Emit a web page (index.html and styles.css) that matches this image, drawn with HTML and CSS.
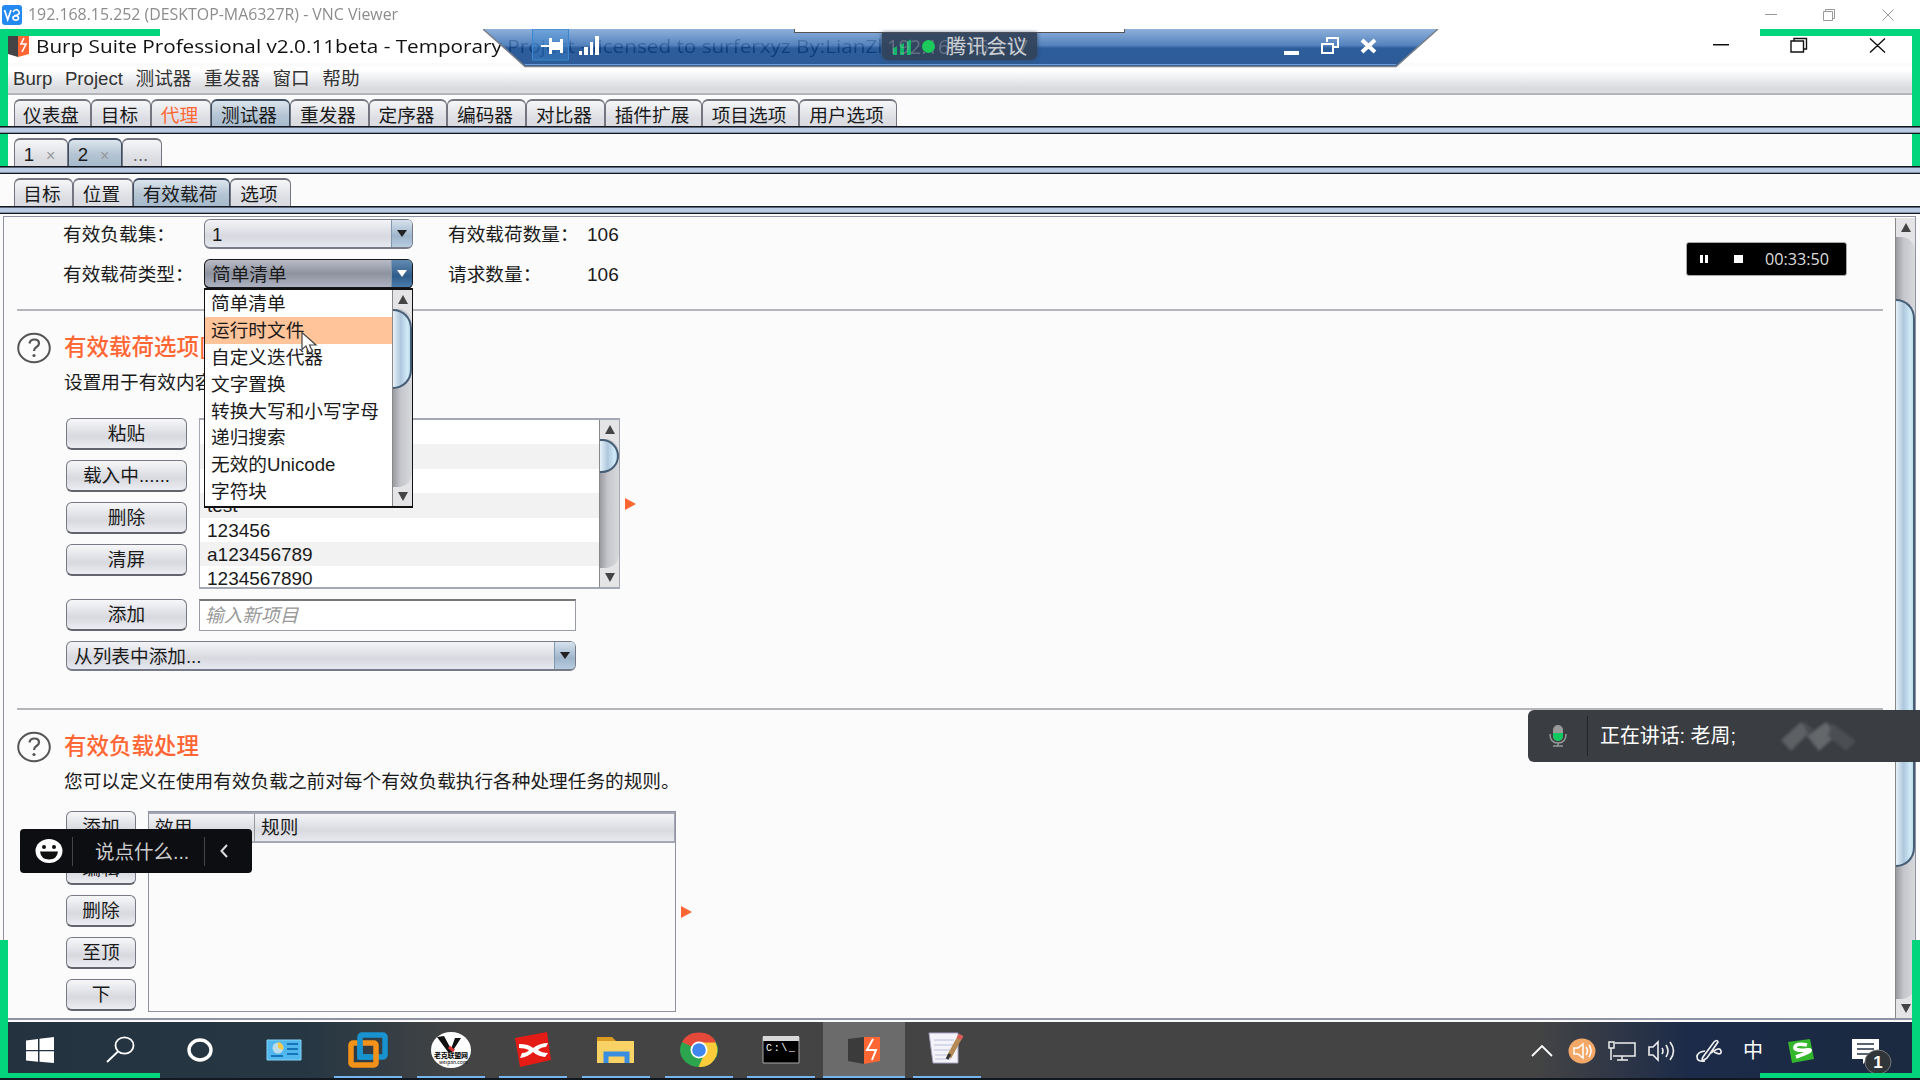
FILE: index.html
```html
<!DOCTYPE html>
<html lang="zh-CN">
<head>
<meta charset="utf-8">
<title>VNC Viewer</title>
<link rel="stylesheet" href="styles.css">
</head>
<body>
<div class="screen">
  <header class="vnc-bar">
    <svg class="vnc-logo" viewBox="0 0 20 20"><rect width="20" height="20" rx="3" fill="#2489f0"/><path d="M2.500 5l3.200 9.500L9 5M11 7q3-4 5.500-1t-2.500 4.500l-3 1.500M12 10.500q4.500 0 4.500 2.500t-4 2q-2.500-1-1-3.500" fill="none" stroke="#fff" stroke-width="1.700"/></svg>
    <span class="vnc-title">192.168.15.252 (DESKTOP-MA6327R) - VNC Viewer</span>
    <svg class="vnc-controls" viewBox="0 0 130 14" fill="none" stroke="#999"><path d="M0 6.500h12M58.500 3.500h9v9h-9zM60.500 3V1.500h9v9H68M117.500 1.500l11 11m0-11l-11 11"/></svg>
  </header>
  <div class="burp-title">
    <svg class="burp-logo" viewBox="0 0 21 21"><path fill="#444345" d="M0 0h10v21L0 18z"/><path fill="#ff6633" d="M10 0h11v18l-11 3z"/><path d="M16 2l-3 6h5l-4 8" fill="none" stroke="#fff" stroke-width="1.600"/></svg>
    <span class="burp-caption">Burp Suite Professional v2.0.11beta - Temporary Project - licensed to surferxyz By:LianZhang</span>
    <svg class="burp-controls" viewBox="0 0 176 18" fill="none" stroke="#111" stroke-width="1.400"><path d="M0 7.700h16M78 4h12.500v11H78zM81 4V1.500h12.500V12H91M157 1.500l15 14m0-14l-15 14"/></svg>
  </div>
  <nav class="menu"><span>Burp</span><span>Project</span><span>测试器</span><span>重发器</span><span>窗口</span><span>帮助</span></nav>
  <div class="tabs t1"><span style="width:77px">仪表盘</span><span style="width:60px">目标</span><span class="hot" style="width:60px">代理</span><span class="on" style="width:79px">测试器</span><span style="width:79px">重发器</span><span style="width:78px">定序器</span><span style="width:79px">编码器</span><span style="width:79px">对比器</span><span style="width:97px">插件扩展</span><span style="width:97px">项目选项</span><span style="width:98px">用户选项</span></div>
  <div class="tabs t2"><span style="width:54px">1<i>×</i></span><span class="on" style="width:54px">2<i>×</i></span><span class="dots" style="width:40px">...</span></div>
  <div class="tabs t3"><span style="width:59px">目标</span><span style="width:60px">位置</span><span class="on" style="width:97px">有效载荷</span><span style="width:61px">选项</span></div>

  <main class="pane">
    <div class="content">
      <section class="sets">
        <label>有效负载集：</label>
        <div class="combo"><b>1</b><i></i></div>
        <label class="second">有效载荷数量：</label><span class="num">106</span>
        <label>有效载荷类型：</label>
        <div class="combo open"><b>简单清单</b><i></i>
          <div class="popup">
            <ul><li>简单清单</li><li class="sel">运行时文件</li><li>自定义迭代器</li><li>文字置换</li><li>转换大写和小写字母</li><li>递归搜索</li><li>无效的Unicode</li><li>字符块</li></ul>
            <div class="sb"><span class="up"></span><span class="track"><span class="thumb" style="height:80px"></span></span><span class="down"></span></div>
            <svg class="cursor" viewBox="0 0 18 24"><path d="M1 1v17l4-3.500 3 7 3.500-1.500-3-6.500H15z" fill="#fff" stroke="#444" stroke-width="1.200"/></svg>
          </div>
        </div>
        <label class="second">请求数量：</label><span class="num">106</span>
      </section>

      <section class="block options">
        <svg class="help" viewBox="0 0 34 32"><ellipse cx="17" cy="16" rx="15.800" ry="14.300" fill="none" stroke="#555" stroke-width="2"/><path d="M12.500 11.500q.500-4 5-4t4.500 4q0 2-2.500 3.500T17 19" fill="none" stroke="#555" stroke-width="2.200"/><circle cx="17" cy="23.500" r="1.600" fill="#555"/></svg>
        <h2>有效载荷选项[</h2>
        <p>设置用于有效内容</p>
        <div class="list-row">
          <div class="buttons"><button>粘贴</button><button>载入中......</button><button>删除</button><button>清屏</button></div>
          <div class="list">
            <ul><li></li><li></li><li></li><li>test</li><li>123456</li><li>a123456789</li><li>1234567890</li></ul>
            <div class="sb"><span class="up"></span><span class="track"><span class="thumb" style="height:34px"></span></span><span class="down"></span></div>
          </div>
          <span class="marker"></span>
        </div>
        <div class="add-row"><button>添加</button><div class="field">输入新项目</div></div>
        <div class="combo wide"><b>从列表中添加...</b><i></i></div>
      </section>

      <section class="block rules">
        <svg class="help" viewBox="0 0 34 32"><ellipse cx="17" cy="16" rx="15.800" ry="14.300" fill="none" stroke="#555" stroke-width="2"/><path d="M12.500 11.500q.500-4 5-4t4.500 4q0 2-2.500 3.500T17 19" fill="none" stroke="#555" stroke-width="2.200"/><circle cx="17" cy="23.500" r="1.600" fill="#555"/></svg>
        <h2>有效负载处理</h2>
        <p>您可以定义在使用有效负载之前对每个有效负载执行各种处理任务的规则。</p>
        <div class="rule-row">
          <div class="buttons small"><button>添加</button><button>编辑</button><button>删除</button><button>至顶</button><button>下</button></div>
          <div class="table"><div class="thead"><span>效用</span><span>规则</span></div></div>
          <span class="marker"></span>
        </div>
      </section>
    </div>
    <div class="sb main-sb"><span class="up"></span><span class="track"><span class="thumb" style="height:568px"></span></span><span class="down"></span></div>
  </main>

  <footer class="taskbar">
    <div class="apps">
      <span class="app plain"><svg viewBox="0 0 44 44"><path fill="#fff" d="M8 12.500l12-1.500v11H8zM21.500 10.800L36 9v13H21.500zM8 23.300h12v10.500L8 32.500zM21.500 23.300H36V35l-14.500-1.300z"/></svg></span>
      <span class="app plain"><svg viewBox="0 0 44 44" fill="none" stroke="#fff" stroke-width="1.800"><ellipse cx="26.500" cy="17.500" rx="9" ry="8.200"/><path d="M20 23.500L9 34"/></svg></span>
      <span class="app plain"><svg viewBox="0 0 44 44"><ellipse cx="22" cy="22" rx="11" ry="10" fill="none" stroke="#fff" stroke-width="3.400"/></svg></span>
      <span class="app plain"><svg viewBox="0 0 44 44"><path fill="#50b8ef" stroke="#84d3f7" d="M5 12h34v20H5z"/><circle cx="16" cy="20" r="5.500" fill="#bcdcea"/><path fill="#f2c94c" d="M16 20v-6a6 6 0 015 8z"/><path d="M9 28h12M25 16h11M25 21h11M25 26h11" stroke="#1675b8" stroke-width="2"/></svg></span>
      <span class="app"><svg viewBox="0 0 44 44" fill="none" stroke-width="5.500"><rect x="14" y="7" width="25" height="22" rx="2" stroke="#1993d0"/><rect x="5" y="15" width="25" height="22" rx="2" stroke="#f29218"/><path d="M14 12v17h11" stroke="#1993d0"/></svg></span>
      <span class="app"><svg viewBox="0 0 44 44"><ellipse cx="22" cy="22" rx="20" ry="18" fill="#fff"/><path fill="#111" d="M8 9l7-1 7 13 4-11h6l-9 14h-4z"/><path d="M20 19l5 4" stroke="#d33" stroke-width="3"/><text x="5" y="30" font-size="7" font-weight="700" textLength="34" class="badge-text">老克联盟网</text><text x="10" y="36" font-size="5" class="badge-text">weipan.com</text></svg></span>
      <span class="app"><svg viewBox="0 0 44 44"><path fill="#e51c16" d="M4 10l32-6 4 28-31 7z"/><path fill="#fff" d="M8 16q10 0 14 4 7-5 15-5l-2 4q-5 0-8 3 4 3 10 3l-3 4q-8-1-12-5-5 5-13 6l2-5q5 0 7-3-4-2-10-2z"/></svg></span>
      <span class="app"><svg viewBox="0 0 44 44"><path fill="#d99b20" d="M3 9h15l4 4v8H3z"/><path fill="#f9d266" d="M3 13h37v22H3z"/><path d="M12 35V26h21v9" fill="none" stroke="#3a8ee0" stroke-width="5"/></svg></span>
      <span class="app"><svg viewBox="0 0 44 44"><ellipse cx="22" cy="22" rx="19" ry="17" fill="#2da44e"/><path d="M5 14a19 17 0 0134 0L22 22z" fill="#e5493a"/><path d="M38.500 14.500a17 17 0 01-17 24.500L29 22l-6-7.500z" fill="#fbcb3b"/><circle cx="22" cy="22" r="8.500" fill="#fff"/><circle cx="22" cy="22" r="6.800" fill="#3f86ee"/></svg></span>
      <span class="app"><svg viewBox="0 0 44 44"><path fill="#000" stroke="#aaa" d="M4 9h36v26H4z"/><path fill="#d8d8d8" d="M4 8h36v5H4z"/><text x="7" y="23" font-size="10" fill="#fff" textLength="29" class="mono">C:\_</text></svg></span>
      <span class="app active"><svg viewBox="0 0 44 44"><path fill="#3b3b3b" d="M6 11l16-2v27L6 33z"/><path fill="#ff6633" d="M22 9h16v24l-16 3z"/><path d="M31 11l-6 11h9l-4 10" fill="none" stroke="#fff" stroke-width="2"/></svg></span>
      <span class="app"><svg viewBox="0 0 44 44"><path fill="#f4f3fa" stroke="#a9a5c5" d="M4 5h29v30H8z"/><path d="M9 12h20M9 17h19M9 22h16M10 27h14M10 31h16" stroke="#b9bed6"/><path d="M36 7L24 29" stroke="#b48a55" stroke-width="5"/><path d="M36 7l-2 4" stroke="#dc5b58" stroke-width="5"/><path d="M25 26l-3 5" stroke="#333" stroke-width="3"/></svg></span>
    </div>
    <div class="tray">
      <svg class="chevron" style="width:22px" viewBox="0 0 22 30" fill="none" stroke="#fff" stroke-width="1.800"><path d="M1 20l10-10 10 10"/></svg>
      <svg style="width:28px" viewBox="0 0 28 30"><ellipse cx="14" cy="15" rx="13.500" ry="12.500" fill="#f3a868"/><path d="M6 12h4l5-4v14l-5-4H6zM18 11q3 4 0 8M21 9q4 6 0 12" fill="none" stroke="#fff" stroke-width="1.500"/></svg>
      <svg style="width:28px" viewBox="0 0 28 30" fill="none" stroke="#eee" stroke-width="1.500"><path d="M7 7h20v13H5M14 20v4M9 24h11M1 6h5v6H1zM3 12v12"/></svg>
      <svg style="width:29px" viewBox="0 0 29 30" fill="none" stroke="#eee" stroke-width="1.600"><path d="M1 11h4l5-5v18l-5-5H1zM14 12q2 3 0 6M18 9q4 6 0 12M22 6q7 9 0 18"/></svg>
      <svg class="pen" style="width:28px" viewBox="0 0 28 30" fill="none" stroke="#eee" stroke-width="1.700"><path d="M9 24q-3 1-1-3L19 6q3-3 4 0L12 22zM10 15q-8 1-8 6t8 4M16 17q9-7 10-2t-7 1"/></svg>
      <span class="ime">中</span>
      <svg style="width:28px" viewBox="0 0 28 30"><path fill="#35b72d" d="M1 6l22-3 4 20-22 4z"/><path d="M20 9q-11-2-12 2t11 3-10 7" fill="none" stroke="#fff" stroke-width="3.600"/></svg>
      <svg class="notice" viewBox="0 0 42 40"><path fill="#fff" d="M1 4h27v20H17l-5 5v-5H1z"/><path d="M6 9h17M6 14h17M6 19h12" stroke="#253044" stroke-width="1.500"/><ellipse cx="27" cy="27" rx="13" ry="12" fill="#30353a" stroke="#777"/><text x="27" y="33" text-anchor="middle" font-size="17" font-weight="700" fill="#fff" class="sans">1</text></svg>
    </div>
  </footer>

  <div class="rdp">
    <svg viewBox="0 0 956 39"><defs><linearGradient id="g" x2="0" y2="1"><stop stop-color="#7da5d6"/><stop offset=".430" stop-color="#3a70b3"/><stop offset=".500" stop-color="#0f458e"/><stop offset="1" stop-color="#0d4387"/></linearGradient></defs><path d="M0 0h955l-42 38H42z" fill="url(#g)" fill-opacity=".87"/><path d="M0 0l42 37.500h871L955 0" fill="none" stroke="#7a8087" stroke-width="1.500"/><path d="M42 35.500h871" stroke="#6c9ddb"/><path d="M49.500 0h36v31h-36z" fill="#3b8bd8" fill-opacity=".35" stroke="#3b86d0"/><path d="M58 17h9" stroke="#fff" stroke-width="2"/><path fill="#fff" d="M66 9h3v4h8v-3h3v14h-3v-3h-8v4h-3z"/><path fill="#fff" d="M96 22h3v4h-3zM101 18h4v8h-4zM107 13h3v13h-3zM112 7h4v19h-4zM801 22h15v4h-15z"/><path d="M839 15h11v9h-11zM844 13V9h11v9h-4" fill="none" stroke="#fff" stroke-width="2"/><path d="M879 11l13 12m0-12l-13 12" stroke="#fff" stroke-width="4"/></svg>
    <span class="meeting-edge"></span>
    <div class="meeting"><i class="bars"></i><i class="dot"></i><b>腾讯会议</b><em>192.168.15.117</em></div>
  </div>
  <div class="timer"><i class="pause"></i><i class="stop"></i><span>00:33:50</span></div>
  <div class="speaking"><svg viewBox="0 0 20 24"><rect x="5" y="1" width="10" height="16" rx="5" fill="#999"/><path d="M5 9h10v3a5 5 0 01-10 0z" fill="#10c95f"/><path d="M2 10q0 9 8 9t8-9M10 19v3M5 22h10" fill="none" stroke="#999" stroke-width="1.500"/></svg><i></i><span>正在讲话: 老周;</span><svg class="smudge" viewBox="0 0 80 36"><path d="M3 22L23 4l10 9-20 20z" fill="#5d6164"/><path d="M29 18L48 4l12 12-19 17z" fill="#64686b"/><path d="M25 3l10 8-6 5zM54 5l24 18-10 10-18-15z" fill="#4b4f53"/></svg></div>
  <div class="chat"><svg viewBox="0 0 28 24"><ellipse cx="14" cy="12" rx="13.500" ry="12" fill="#fff"/><circle cx="9" cy="8" r="2" fill="#111"/><circle cx="19" cy="8" r="2" fill="#111"/><path d="M5 12.500h18q-1 8-9 8t-9-8z" fill="#111"/></svg><i></i><span>说点什么...</span><i></i><svg class="chev" viewBox="0 0 10 14"><path d="M8 1L2.500 7 8 13" fill="none" stroke="#ddd" stroke-width="2"/></svg></div>
  <i class="corner tl"></i><i class="corner tr"></i><i class="corner bl"></i><i class="corner br"></i>
</div>
</body>
</html>
```
FILE: styles.css
```css
* { box-sizing: border-box; }
body { margin: 0; background: #fbfbfb; color: #1a1a1a; font: 18.670px/24px "Liberation Sans", "Noto Sans CJK SC", sans-serif; }
i, em { font-style: normal; }
b { font-weight: 400; }
.screen { position: relative; width: 1920px; height: 1080px; overflow: hidden; display: flex; flex-direction: column; white-space: nowrap; }
.vnc-bar { height: 29px; background: #fff; display: flex; align-items: center; padding: 0 25px 0 2px; gap: 6px; }
.vnc-logo { width: 20px; height: 20px; }
.vnc-title { font: 16px/29px "Open Sans", sans-serif; color: #8c8c8c; transform: scaleX(.993); transform-origin: left; }
.vnc-controls { width: 130px; height: 14px; margin-left: auto; }
.burp-title { height: 34px; background: #fff; display: flex; align-items: center; padding: 0 31px 0 8px; }
.burp-logo { width: 21px; height: 21px; }
.burp-caption { font: 19px/34px "Open Sans", sans-serif; color: #111; margin-left: 7px; transform: scaleX(1.090); transform-origin: left; }
.burp-controls { width: 176px; height: 18px; margin-left: auto; flex: none; }
.menu { height: 32px; display: flex; align-items: center; padding: 1px 0 0 13px; gap: 12.500px; background: linear-gradient(#fafafa, #fff 25%, #d8dade 85%, #dcdee2); border-bottom: 2px solid #b3b5bb; color: #333; }
.tabs { height: 40px; padding: 4px 0 0 14px; display: flex; background: #fbfbfb; position: relative; border-bottom: 6px solid #b8cbe4; }
.tabs::after { content: ""; position: absolute; left: 0; right: 0; bottom: -6px; height: 6px; border: 1px solid #14161e; background: #b8cbe2; border-width: 1px 0; box-shadow: inset 0 1px #5d6678, inset 0 -1px #8b96aa; z-index: 2; }
.t1 { height: 39px; }
.tabs span { height: 31px; line-height: 29px; text-align: center; padding-right: 3px; border: 2px solid #737580; border-width: 2px 1px 0; border-radius: 6px 6px 0 0; background: linear-gradient(#f6f6f8, #dcdee3 60%, #d8dae0); }
.tabs .on { background: linear-gradient(#dbe5ec, #b4c4d3 50%, #a2b8cb); z-index: 1; border-color: #3f4c60; }
.tabs .hot { color: #ff6633; }
.tabs i { color: #999; font-size: 16px; margin-left: 12px; }
.tabs .dots { color: #666; }
.pane { margin: 2px 4px 0 3px; height: 804px; border: 1px solid #8f92a3; border-width: 1px 1px 2px 1px; padding: 1px 0 0 1px; display: flex; flex: none; }
.content { flex: 1; padding: 0 12px 0 12px; }
.sets { display: grid; grid-template-columns: 141px 209px 138px 1fr; grid-template-rows: 30px 30px; row-gap: 10px; padding: 1px 0 0 46px; height: 91px; }
.sets label, .sets .num { line-height: 31px; }
.sets .second { padding-left: 35px; }
.sets .num { padding-left: 36px; font-size: 19px; }
.combo { position: relative; height: 30px; display: flex; border: 1px solid #777b87; border-bottom-width: 2px; border-radius: 6px; background: linear-gradient(#f4f4f7, #d7d9df 60%, #e6e8ef); line-height: 29px; }
.combo b { flex: 1; padding-left: 7px; }
.combo > i { width: 21px; background: linear-gradient(#d6e2ed, #9eb5cb 60%, #b8cce0); border-left: 1px solid #8298ad; border-radius: 0 4px 4px 0; display: grid; place-items: center; }
.combo > i::after { content: ""; border: 5px solid transparent; border-top: 7px solid #222; border-bottom: 0; }
.combo.open { border-color: #16181d; background: linear-gradient(#b9bcc7, #8e929f 50%, #adb2c2); }
.combo.open > i { background: linear-gradient(#638bb2, #2f5c8b 60%, #4b7dab); }
.combo.open > i::after { border-top-color: #fff; }
.popup { position: absolute; left: -1px; top: 28px; width: 209px; height: 220px; z-index: 3; border: 2px solid #111; border-width: 2px 1px; background: #fff; display: flex; }
.popup ul { flex: 1; }
ul { margin: 0; padding: 0; list-style: none; }
.popup li { height: 26.900px; line-height: 27px; padding-left: 6px; }
.popup .sel { background: #ffc499; }
.cursor { position: absolute; left: 96px; top: 41px; width: 18px; height: 25px; }
.sb { width: 20px; display: flex; flex-direction: column; background: #e4e4e6; border-left: 1px solid #888; }
.sb .up, .sb .down { height: 19px; display: grid; place-items: center; flex: none; }
.sb .up::after { content: ""; border: 5px solid transparent; border-bottom: 9px solid #444; border-top: 0; }
.sb .down::after { content: ""; border: 5px solid transparent; border-top: 9px solid #444; border-bottom: 0; }
.sb .track { flex: 1; background: linear-gradient(90deg, #999ba1, #c5c6cb 40%, #d8d9dd); border-radius: 0 14px 14px 0; }
.sb .thumb { display: block; border: 2px solid #465d76; border-left: 0; border-radius: 0 20px 20px 0; background: linear-gradient(90deg, #e5f1f8, #afc7de 45%, #d0ebf7 85%, #bcdae9); }
.block { border-top: 2px solid #b6b6ba; position: relative; display: flex; flex-direction: column; align-items: flex-start; padding-left: 49px; }
.help { position: absolute; left: 0; top: 21px; width: 34px; height: 32px; }
h2 { margin: 18px 0 0 -2px; font: 500 22.500px/32px "Noto Sans CJK SC", sans-serif; color: #ff6633; }
.block p { margin: 8px 0 0 -2px; line-height: 27px; }
.options { height: 399px; }
.list-row, .rule-row { display: flex; margin-top: 22px; }
.buttons { display: flex; flex-direction: column; gap: 10px; }
button { font: inherit; color: #1a1a1a; width: 121px; height: 32px; padding: 0; line-height: 28px; border: 1.500px solid #777a85; border-bottom: 2px solid #62656e; border-radius: 6px; background: linear-gradient(#f7f7f9, #d7d9df 60%, #ecedf2); }
.list { margin-left: 12px; width: 421px; height: 171px; border: 2px solid #a4a7b4; border-width: 2px 1px; background: #fff; display: flex; overflow: hidden; }
.list ul { flex: 1; }
.list li { height: 24.400px; padding-left: 7px; line-height: 25px; font-size: 19px; }
.list li:nth-child(even) { background: #f2f2f2; }
.marker { align-self: center; margin-left: 5px; border: 6px solid transparent; border-left: 11px solid #ff6633; border-right: 0; }
.add-row { display: flex; margin-top: 10px; gap: 12px; }
.field { width: 377px; height: 32px; border: 1px solid #9a9ca5; border-top: 2px solid #777; background: #fff; color: #999; font-style: italic; padding-left: 5px; line-height: 29px; }
.wide { width: 510px; margin-top: 10px; }
.small button { width: 70px; }
.rule-row { height: 201px; margin-top: 16px; }
.table { width: 528px; margin-left: 12px; border: 1px solid #8f92a3; }
.thead { display: flex; height: 31px; border: 2px solid #a3a6b3; border-width: 2px 1px 2px 0; background: linear-gradient(#f5f5f7, #d8dae0 60%, #e8e9ee); }
.thead span { width: 105px; line-height: 28px; padding-left: 6px; }
.thead span + span { border-left: 1px solid #999; }
.main-sb { flex: none; }
.main-sb .track { padding-top: 62px; }
.taskbar { height: 58px; margin-top: 2px; flex: none; border-bottom: 2px solid #111820; background: linear-gradient(90deg, #24323f, #263743 16%, #444 24%, #444 80%, #1c2b49 88%, #1b2940); display: flex; justify-content: space-between; }
.apps { display: flex; padding-left: 8px; align-items: stretch; }
.app { width: 68px; margin-right: 14.700px; padding-top: 2px; display: grid; place-items: center; border-bottom: 2px solid #76b5ed; flex: none; }
.app.plain { border-color: transparent; width: 64px; margin-right: 16px; }
.app svg { width: 44px; height: 44px; }
.app.active { width: 82px; margin: 0 7.700px 0 -7px; background: #6b6b6b; }
.app:nth-child(4) { margin-left: 4px; }
.app:nth-child(5) { margin-left: 2px; }
.badge-text { font-family: "Noto Sans CJK SC", sans-serif; }
.mono { font-family: "Liberation Mono", monospace; }
.sans { font-family: "Liberation Sans", sans-serif; }
.tray { display: flex; align-items: center; gap: 12px; padding: 2px 27px 0 0; color: #fff; }
.tray svg { height: 30px; }
.tray .chevron { margin-right: 3px; }
.pen { margin-left: 6px; }
.ime { width: 22px; font-size: 20px; margin: 0 10px 0 8px; }
.tray .notice { width: 42px; height: 40px; margin: 7px 0 0 24px; }
.rdp { position: absolute; left: 483px; top: 29px; width: 956px; height: 39px; overflow: hidden; }
.rdp > svg { position: absolute; inset: 0; width: 956px; height: 39px; }
.meeting-edge { position: absolute; left: 311px; top: 0; width: 331px; height: 4px; background: #fff; border: 1px solid #555; border-width: 0 1px 1px; }
.meeting { position: absolute; left: 399px; top: 4px; width: 155px; height: 27px; background: #33435cf2; border-radius: 0 0 6px 6px; box-shadow: 0 0 4px #33435c; color: #ccd0d4; display: flex; align-items: center; padding-left: 11px; gap: 8px; }
.meeting b { font-size: 20.300px; z-index: 1; margin-left: 3px; }
.meeting em { position: absolute; left: 5px; top: 1px; color: #b8bcc0; opacity: .35; font: 20px/26px "Open Sans", sans-serif; }
.bars { width: 21px; height: 17px; background: repeating-linear-gradient(90deg, #13b669 0 4px, transparent 4px 7px); clip-path: polygon(0 60%, 100% 0, 100% 100%, 0 100%); }
.dot { width: 13px; height: 13px; border-radius: 50%; background: #1cc95b; z-index: 1; }
.timer { position: absolute; left: 1686px; top: 242px; width: 161px; height: 34px; border: 1px solid #aaa; border-radius: 3px; background: #000; color: #ddd; display: flex; align-items: center; padding-left: 13px; font: 16.200px "Open Sans", sans-serif; }
.pause { width: 8px; height: 8px; border: solid #fff; border-width: 0 3px; margin-right: 26px; }
.stop { width: 9px; height: 8px; background: #fff; margin-right: 22px; }
.speaking { position: absolute; left: 1528px; top: 710px; width: 392px; height: 52px; border-radius: 6px 0 0 6px; background: #3a3d41; color: #fff; display: flex; align-items: center; padding-left: 20px; font-size: 19.900px; }
.speaking svg { width: 20px; height: 24px; }
.speaking i { width: 1px; height: 40px; background: #222529; margin: 0 12px 0 19px; }
.speaking .smudge { width: 80px; height: 36px; margin-left: 42px; filter: blur(1.500px); }
.chat { position: absolute; left: 20px; top: 829px; width: 232px; height: 44px; border-radius: 4px; background: #0d0e12; color: #ccc; display: flex; align-items: center; padding-left: 15px; font-size: 19.500px; }
.chat svg { width: 28px; height: 24px; }
.chat i { width: 1px; height: 29px; background: #43444a; margin-left: 9px; }
.chat span { margin: 2px 6px 0 22px; }
.chat .chev { width: 10px; height: 14px; margin-left: 14px; }
.corner { position: absolute; width: 160px; height: 140px; border: 0 solid #02d57b; }
.tl { left: 0; top: 29px; border-width: 7px 0 0 8px; }
.tr { right: 0; top: 29px; border-width: 7px 8px 0 0; }
.bl { left: 0; top: 940px; height: 138px; border-width: 0 0 5px 8px; }
.br { right: 0; top: 940px; height: 138px; border-width: 0 8px 5px 0; }
```
